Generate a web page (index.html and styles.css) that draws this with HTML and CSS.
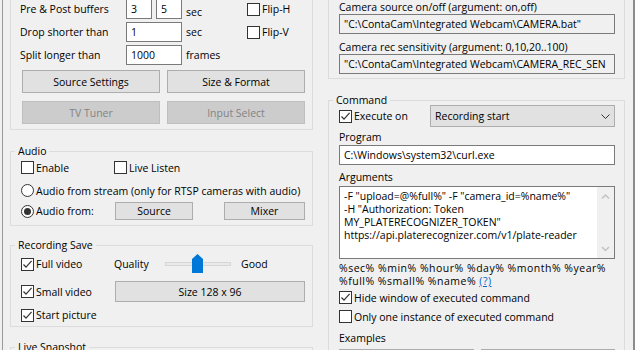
FILE: index.html
```html
<!DOCTYPE html>
<html lang="en">
<head>
    <meta charset="UTF-8">
    <meta name="viewport" content="width=device-width, initial-scale=1.0">
    <title>Camera Advanced Settings</title>
    <link rel="stylesheet" href="styles.css">
</head>
<body>
    <div class="sheet">
        <div class="col col-left">
            <fieldset class="group cut">
                <div class="body body-video">
                    <div class="frow">
                        <span class="flbl">Pre &amp; Post buffers</span>
                        <span class="edit small">3</span>
                        <span class="edit small">5</span>
                        <span class="unit low">sec</span>
                        <span class="check"><span class="box"></span>Flip-H</span>
                    </div>
                    <div class="frow">
                        <span class="flbl">Drop shorter than</span>
                        <span class="edit mid">1</span>
                        <span class="unit">sec</span>
                        <span class="check"><span class="box"></span>Flip-V</span>
                    </div>
                    <div class="frow">
                        <span class="flbl">Split longer than</span>
                        <span class="edit mid">1000</span>
                        <span class="unit">frames</span>
                    </div>
                    <div class="btn-grid">
                        <div class="btn">Source Settings</div>
                        <div class="btn">Size &amp; Format</div>
                        <div class="btn off">TV Tuner</div>
                        <div class="btn off">Input Select</div>
                    </div>
                </div>
            </fieldset>

            <fieldset class="group audio">
                <legend>Audio</legend>
                <div class="body body-audio">
                    <div class="arow a1">
                        <span class="check w93"><span class="box"></span>Enable</span>
                        <span class="check"><span class="box"></span>Live Listen</span>
                    </div>
                    <div class="arow a2">
                        <span class="check"><span class="radio"></span>Audio from stream (only for RTSP cameras with audio)</span>
                    </div>
                    <div class="arow a3">
                        <span class="check w94"><span class="radio on"></span>Audio from:</span>
                        <div class="btn sbtn source">Source</div>
                        <div class="btn sbtn mixer">Mixer</div>
                    </div>
                </div>
            </fieldset>

            <fieldset class="group save">
                <legend>Recording Save</legend>
                <div class="body body-save">
                    <div class="arow r1">
                        <span class="check w93"><span class="box"><svg width="11" height="11" viewBox="0 0 11 11"><polyline points="1.5,5.5 4,8.2 9.6,1.8" /></svg></span>Full video</span>
                        <span class="quality">Quality</span>
                        <svg class="slider" width="66" height="20" viewBox="0 0 66 20">
                            <rect x="0.5" y="8.5" width="65" height="3" fill="#e7eaea" stroke="#d6d6d6" />
                            <polygon points="27,5 32.5,0 38,5 38,19 27,19" fill="#0078d7" />
                        </svg>
                        <span>Good</span>
                    </div>
                    <div class="arow r2">
                        <span class="check w94"><span class="box"><svg width="11" height="11" viewBox="0 0 11 11"><polyline points="1.5,5.5 4,8.2 9.6,1.8" /></svg></span>Small video</span>
                        <div class="btn size-btn">Size 128 x 96</div>
                    </div>
                    <div class="arow r3">
                        <span class="check"><span class="box"><svg width="11" height="11" viewBox="0 0 11 11"><polyline points="1.5,5.5 4,8.2 9.6,1.8" /></svg></span>Start picture</span>
                    </div>
                </div>
            </fieldset>

            <fieldset class="group snap">
                <legend>Live Snapshot</legend>
                <div class="body body-snap"></div>
            </fieldset>
        </div>

        <div class="col col-right">
            <fieldset class="group cut">
                <div class="body body-ext">
                    <div class="lbl">Camera source on/off (argument: on,off)</div>
                    <div class="edit ro">"C:\ContaCam\Integrated Webcam\CAMERA.bat"</div>
                    <div class="lbl second">Camera rec sensitivity (argument: 0,10,20..100)</div>
                    <div class="edit ro">"C:\ContaCam\Integrated Webcam\CAMERA_REC_SEN</div>
                </div>
            </fieldset>

            <fieldset class="group command">
                <legend>Command</legend>
                <div class="body body-cmd">
                    <div class="arow exec">
                        <span class="check w91"><span class="box"><svg width="11" height="11" viewBox="0 0 11 11"><polyline points="1.5,5.5 4,8.2 9.6,1.8" /></svg></span>Execute on</span>
                        <div class="combo">
                            <span>Recording start</span>
                            <svg width="9" height="5" viewBox="0 0 9 5"><polyline points="0.5,0.5 4.5,4.5 8.5,0.5" /></svg>
                        </div>
                    </div>
                    <div class="lbl prog-lbl">Program</div>
                    <div class="edit prog">C:\Windows\system32\curl.exe</div>
                    <div class="lbl args-lbl">Arguments</div>
                    <div class="args">
                        <div class="args-text">-F "upload=@%full%" -F "camera_id=%name%"
-H "Authorization: Token
MY_PLATERECOGNIZER_TOKEN"
https://api.platerecognizer.com/v1/plate-reader</div>
                        <div class="sbar">
                            <svg width="17" height="17" viewBox="0 0 17 17"><polyline points="5,11.5 8.5,8 12,11.5" /></svg>
                            <svg width="17" height="17" viewBox="0 0 17 17"><polyline points="5,6 8.5,9.5 12,6" /></svg>
                        </div>
                    </div>
                    <div class="tokens">%sec% %min% %hour% %day% %month% %year%<br>%full% %small% %name% <a href="#">(?)</a></div>
                    <div class="arow crow">
                        <span class="check"><span class="box"><svg width="11" height="11" viewBox="0 0 11 11"><polyline points="1.5,5.5 4,8.2 9.6,1.8" /></svg></span>Hide window of executed command</span>
                    </div>
                    <div class="arow crow">
                        <span class="check"><span class="box"></span>Only one instance of executed command</span>
                    </div>
                    <div class="lbl ex-lbl">Examples</div>
                    <div class="ex-grid">
                        <div class="btn"></div>
                        <div class="btn"></div>
                    </div>
                </div>
            </fieldset>
        </div>
    </div>
</body>
</html>
```

FILE: styles.css
```css
body {
    margin: 0;
    background: #f0f0f0;
    font-family: "Open Sans", "Segoe UI", sans-serif;
    font-size: 10.5px;
    color: #000;
    overflow: hidden;
}
.sheet {
    display: flex;
    gap: 15px;
    width: 633px;
    height: 350px;
    margin-left: 2px;
    padding-left: 7px;
    box-sizing: border-box;
    border-left: 1px solid #9a9a9a;
    border-right: 2px solid #8c8c8c;
    overflow: hidden;
}
.col {
    display: flex;
    flex-direction: column;
    flex: none;
}
.col-left {
    width: 303px;
}
.col-right {
    width: 297px;
}

/* group boxes */
.group {
    margin: 0;
    padding: 0;
    min-width: 0;
    border: 1px solid #dcdcdc;
}
.group legend {
    margin-left: 4px;
    padding: 0 3px;
    height: 13px;
    line-height: 13px;
}
.cut {
    margin-top: -10px;
}
.audio {
    margin-top: 15px;
}
.save {
    margin-top: 13px;
}
.snap {
    margin-top: 14px;
}
.command {
    margin-top: 15px;
}
.body-video {
    padding: 8px 7px 5px 9px;
}
.body-audio {
    padding: 0 7px 5px 10px;
}
.body-save {
    padding: 1px 7px 1px 10px;
}
.body-snap {
    height: 40px;
}
.body-ext {
    padding: 9px 9px 4px 10px;
}
.body-cmd {
    padding: 0 9px 0 10px;
}

/* rows */
.frow {
    display: flex;
    align-items: center;
    height: 20px;
}
.frow + .frow {
    margin-top: 3px;
}
.flbl {
    width: 106px;
}
.unit {
    width: 61px;
    margin-left: 4px;
}
.low {
    padding-top: 5px;
}
.arow {
    display: flex;
    align-items: center;
}
.a1 { height: 19px; }
.a2 { height: 19px; margin-top: 4px; }
.a3 { height: 18px; margin-top: 2px; }
.r1 { height: 20px; margin-top: 1px; }
.r2 { height: 21px; margin-top: 7px; }
.r3 { height: 20px; margin-top: 3px; }
.exec { height: 22px; margin-top: -2px; }
.crow { height: 19px; }

/* edits */
.edit {
    display: flex;
    align-items: center;
    height: 20px;
    padding: 0 4px;
    box-sizing: border-box;
    border: 1px solid #7a7a7a;
    background: #fff;
    white-space: nowrap;
    overflow: hidden;
}
.edit.small {
    width: 26px;
}
.edit.small + .edit.small {
    margin-left: 4px;
}
.edit.mid {
    width: 56px;
}
.edit.ro {
    background: #f0f0f0;
}
.lbl {
    height: 14px;
    line-height: 14px;
}
.second {
    margin-top: 6px;
}
.prog-lbl { margin-top: 3px; }
.prog { margin-top: 1px; }
.args-lbl { margin-top: 5px; }

/* buttons */
.btn {
    display: flex;
    align-items: center;
    justify-content: center;
    height: 23px;
    box-sizing: border-box;
    border: 1px solid #adadad;
    background: #e1e1e1;
}
.btn.off {
    background: #cccccc;
    border-color: #bfbfbf;
    color: #838383;
}
.btn-grid {
    display: grid;
    grid-template-columns: 138px 138px;
    column-gap: 7px;
    row-gap: 8px;
    margin: 5px 0 0 2px;
}
.sbtn {
    height: 18px;
}
.source {
    width: 78px;
}
.mixer {
    width: 81px;
    margin-left: 31px;
}
.size-btn {
    width: 190px;
    height: 21px;
}
.ex-grid {
    display: grid;
    grid-template-columns: 1fr 1fr;
    column-gap: 7px;
    margin-top: 4px;
}

/* checks and radios */
.check {
    display: flex;
    align-items: center;
    gap: 2px;
    white-space: nowrap;
}
.w91 { width: 91px; }
.w93 { width: 93px; }
.w94 { width: 94px; }
.box {
    flex: none;
    width: 13px;
    height: 13px;
    box-sizing: border-box;
    border: 1px solid #333;
    background: #fff;
}
.box svg {
    display: block;
}
.box polyline {
    fill: none;
    stroke: #333;
    stroke-width: 1.2;
}
.radio {
    flex: none;
    display: flex;
    align-items: center;
    justify-content: center;
    width: 13px;
    height: 13px;
    box-sizing: border-box;
    border: 1px solid #333;
    border-radius: 50%;
    background: #fff;
}
.radio.on::after {
    content: "";
    width: 7px;
    height: 7px;
    border-radius: 50%;
    background: #333;
}
.flbl + .edit {
    flex: none;
}

/* recording save */
.quality {
    width: 51px;
}
.slider {
    margin-right: 10px;
}

/* command */
.combo {
    flex: 1;
    display: flex;
    align-items: center;
    justify-content: space-between;
    height: 22px;
    padding: 0 4px 0 4px;
    box-sizing: border-box;
    border: 1px solid #adadad;
    background: #e1e1e1;
}
.combo polyline {
    fill: none;
    stroke: #333;
    stroke-width: 1;
}
.args {
    display: flex;
    height: 73px;
    margin-top: 2px;
    box-sizing: border-box;
    border: 1px solid #7a7a7a;
    background: #fff;
}
.args-text {
    flex: 1;
    padding: 3px 4px 0;
    line-height: 13px;
    white-space: pre;
    overflow: hidden;
}
.sbar {
    width: 17px;
    display: flex;
    flex-direction: column;
    justify-content: space-between;
    background: #f0f0f0;
}
.sbar svg {
    display: block;
}
.sbar polyline {
    fill: none;
    stroke: #c2c2c2;
    stroke-width: 1.5;
}
.tokens {
    margin-top: 3px;
    line-height: 13px;
    letter-spacing: 0.5px;
}
.tokens a {
    color: #0066cc;
}
.ex-lbl {
    margin-top: 5px;
}
```
